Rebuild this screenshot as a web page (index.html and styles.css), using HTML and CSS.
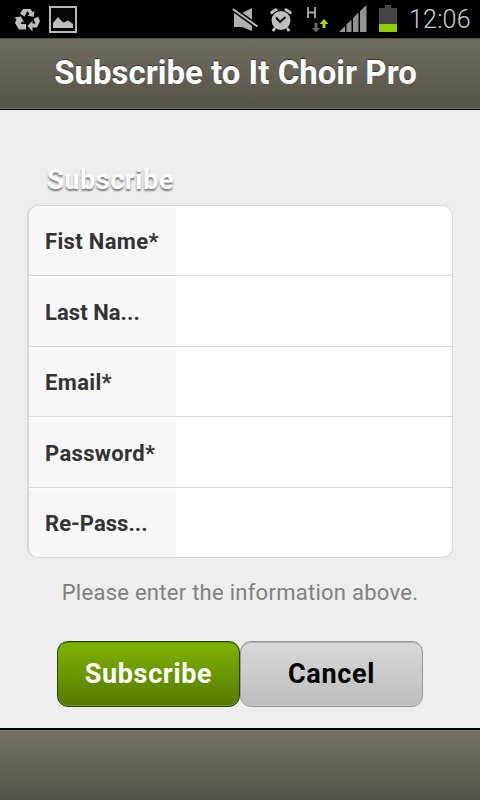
FILE: index.html
```html
<!DOCTYPE html>
<html lang="en">
<head>
<meta charset="utf-8">
<title>Subscribe to It Choir Pro</title>
<link rel="stylesheet" href="styles.css">
</head>
<body>
<div class="status">
  <svg class="recycle" width="28" height="26" viewBox="0 0 28 26" fill="#bdbdbd">
    <path d="M7 6.500 10 2H17.500L19.500 5 21.500 4 20.500 10 14.500 8.500 16.500 7 14.500 4 11.500 9.500Z"/>
    <path d="M20.500 12 25 9.500 27 14 24 20.500H19.500V24.500L14.500 19 19.500 13.500V16.500H22.500Z"/>
    <path d="M1 10.500 8 9.500 11 15.500 9 14.500 7.500 17H13V22.500H6L2 16 3.500 12Z"/>
  </svg>
  <svg class="photo" width="28" height="27" viewBox="0 0 28 27">
    <rect x="1" y="1" width="26" height="25" fill="#050505" stroke="#b8b8b8" stroke-width="2"/>
    <path d="M4 22V17L9 11 13 15.500 15 16.500 19 14.500 24 18V22Z" fill="#bdbdbd"/>
  </svg>
  <svg class="mute" width="27" height="25" viewBox="0 0 27 25">
    <path d="M2 6H10L20 1V24L10 20H2Z" fill="#b0b0b0"/>
    <path d="M1 2 26 20" stroke="#000" stroke-width="5"/>
    <path d="M.8 2 25.500 19.500" stroke="#b8b8b8" stroke-width="2"/>
  </svg>
  <svg class="alarm" width="24" height="25" viewBox="0 0 24 25">
    <path d="M3 5.500 7 3M17 3 21 5.500" stroke="#bbb" stroke-width="3.500" stroke-linecap="round"/>
    <path d="M6 20 4 24M18 20 20 24" stroke="#bbb" stroke-width="2.500"/>
    <circle cx="12" cy="13.500" r="10.500" fill="#000"/>
    <circle cx="12" cy="13.500" r="9.500" fill="#bebebe"/>
    <path d="M6 21 4 24M18 21 20 24" stroke="#bbb" stroke-width="2.500"/>
    <path d="M7 10.500 11 15 16.500 10" fill="none" stroke="#111" stroke-width="2"/>
  </svg>
  <svg class="data" width="24" height="28" viewBox="0 0 24 28">
    <path d="M2 1V12M9 1V12M2 6.500H9" fill="none" stroke="#aaa" stroke-width="1.800"/>
    <path d="M8.500 17H11.500V22H14L10 26.500 6 22H8.500Z" fill="#666"/>
    <path d="M18 13 22.500 18H19.500V22H16.500V18H13.500Z" fill="#a6de00"/>
  </svg>
  <svg class="signal" width="28" height="28" viewBox="0 0 28 28" fill="#929292">
    <path d="M0 27 6 21V27ZM7.500 19.500 12.500 14.500V27H7.500ZM14 13 19.500 7.500V27H14ZM21 6 27.500 0V27H21Z"/>
  </svg>
  <svg class="battery" width="18" height="27" viewBox="0 0 18 27">
    <path d="M6 0H12V3H18V19H0V3H6Z" fill="#444"/>
    <path d="M0 19H18V27H0Z" fill="#90d000"/>
  </svg>
  <span class="clock">12:06</span>
</div>
<header class="bar head"><h1>Subscribe to It Choir Pro</h1></header>
<main>
  <h2>Subscribe</h2>
  <form class="fields">
    <label class="row"><span class="label">Fist Name*</span></label>
    <label class="row"><span class="label clipped">Last Na...</span></label>
    <label class="row"><span class="label">Email*</span></label>
    <label class="row"><span class="label">Password*</span></label>
    <label class="row"><span class="label clipped">Re-Pass...</span></label>
  </form>
  <p class="hint">Please enter the information above.</p>
  <div class="buttons">
    <button class="go" type="button">Subscribe</button>
    <button class="cancel" type="button">Cancel</button>
  </div>
</main>
<footer class="bar foot"></footer>
</body>
</html>
```

FILE: styles.css
```css
* { box-sizing: border-box; }
body {
  margin: 0;
  width: 480px;
  height: 800px;
  display: flex;
  flex-direction: column;
  overflow: hidden;
  background: #eee;
  font-family: Roboto, sans-serif;
}
.status {
  height: 38px;
  flex: none;
  display: flex;
  align-items: flex-start;
  background: #000;
}
.status svg { flex: none; display: block; }
.recycle { margin: 7px 0 0 13px; }
.photo { margin: 6px 0 0 8px; }
.mute { margin: 7px 0 0 155px; }
.alarm { margin: 7px 0 0 10px; }
.data { margin: 6px 0 0 13px; }
.signal { margin: 5px 0 0 9px; }
.battery { margin: 5px 0 0 12px; }
.clock {
  margin-left: 12px;
  color: #d0d0d0;
  font-size: 25px;
  font-weight: 300;
  letter-spacing: .2px;
  line-height: 40px;
  white-space: nowrap;
}
.bar {
  flex: none;
  background: linear-gradient(#716c60, #585349);
}
.head {
  height: 72px;
  border-top: 1px solid #544f46;
  border-bottom: 1px solid #000;
  box-shadow: inset 0 -1px #77736a;
}
h1 {
  margin: 0;
  padding-right: 9px;
  color: #fff;
  font-size: 33px;
  line-height: 67px;
  text-align: center;
  white-space: nowrap;
  text-shadow: 0 -1px 1px #333;
}
main { flex: 1; padding: 50px 27px 0; }
h2 {
  margin: 0 0 0 20px;
  height: 45px;
  color: #fff;
  font-size: 27px;
  line-height: 40px;
  letter-spacing: .6px;
  text-shadow: 0 2px 2px #777;
}
.fields {
  height: 353px;
  display: grid;
  grid-template-rows: 70px 71px 70px 71px 69px;
  overflow: hidden;
  background: #fff;
  border: 1px solid #d8d8d8;
  border-left-width: 2px;
  border-radius: 11px;
}
.row { padding-top: 2px; border-bottom: 1px solid #d8d8d8; }
.row:last-child { border-bottom: 0; }
.label {
  display: block;
  width: 147px;
  height: 100%;
  padding-left: 16px;
  background: #f7f7f7;
  color: #333;
  font-size: 22px;
  font-weight: 700;
  letter-spacing: .35px;
  line-height: 67px;
  white-space: nowrap;
}
.clipped { letter-spacing: .05px; }
.row:nth-child(2n) .label { line-height: 69px; }
.hint {
  margin: 19px 0 0;
  height: 64px;
  color: #808080;
  font-size: 22px;
  line-height: 32px;
  letter-spacing: .27px;
  text-align: center;
  white-space: nowrap;
}
.buttons { display: flex; margin-left: 30px; }
button {
  width: 183px;
  height: 66px;
  padding: 0;
  border-radius: 11px;
  font: 700 27px Roboto, sans-serif;
  letter-spacing: .65px;
}
.go {
  color: #fff;
  background: linear-gradient(#7eb300, #577900);
  border: 1.5px solid #254600;
  box-shadow: inset 0 1px #5f8d0a, inset 0 -1px #779525;
}
.cancel {
  color: #000;
  background: linear-gradient(#d9d9d9, #bdbdbd);
  border: 1px solid #999;
  box-shadow: inset 0 1px #bbb, inset 0 -1px #ccc;
}
.foot { height: 72px; border-top: 2px solid #000; background: linear-gradient(#747064, #615d50 70%, #56514b); }
```
